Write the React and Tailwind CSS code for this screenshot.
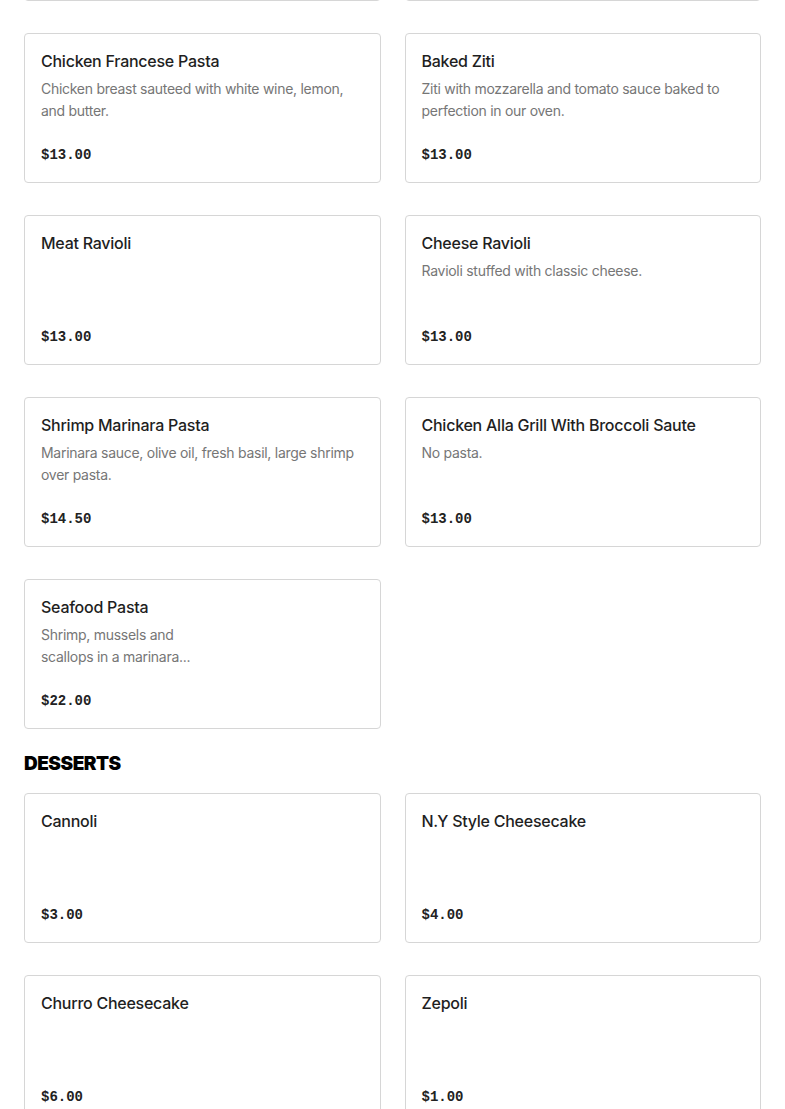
import React from "react";

const pasta = [
  { name: "Chicken Francese Pasta", desc: "Chicken breast sauteed with white wine, lemon, and butter.", price: "$13.00" },
  { name: "Baked Ziti", desc: "Ziti with mozzarella and tomato sauce baked to perfection in our oven.", price: "$13.00" },
  { name: "Meat Ravioli", desc: "", price: "$13.00" },
  { name: "Cheese Ravioli", desc: "Ravioli stuffed with classic cheese.", price: "$13.00" },
  { name: "Shrimp Marinara Pasta", desc: "Marinara sauce, olive oil, fresh basil, large shrimp over pasta.", price: "$14.50" },
  { name: "Chicken Alla Grill With Broccoli Saute", desc: "No pasta.", price: "$13.00" },
  { name: "Seafood Pasta", desc: ["Shrimp, mussels and", "scallops in a marinara..."], price: "$22.00" },
];

const desserts = [
  { name: "Cannoli", desc: "", price: "$3.00" },
  { name: "N.Y Style Cheesecake", desc: "", price: "$4.00" },
  { name: "Churro Cheesecake", desc: "", price: "$6.00" },
  { name: "Zepoli", desc: "", price: "$1.00" },
];

function Card({ item }) {
  return (
    <div className="h-[150px] rounded-[4px] border border-[#d6d6d6] bg-white px-4 pt-[15px] pb-[17px] flex flex-col">
      {item && (
        <>
          <div className="text-[16px] leading-[24px] font-medium text-[#1f1f1f] tracking-[-0.25px]">{item.name}</div>
          {item.desc && (
            <div className="mt-[5px] pr-2 text-[14px] leading-[22px] text-[#767676] tracking-[-0.28px]">
              {Array.isArray(item.desc)
                ? item.desc.map((l, i) => (
                    <React.Fragment key={i}>
                      {l}
                      {i < item.desc.length - 1 && <br />}
                    </React.Fragment>
                  ))
                : item.desc}
            </div>
          )}
          <div
            className="mt-auto text-[14px] leading-[20px] font-bold text-[#222222]"
            style={{ fontFamily: '"Liberation Mono", monospace' }}
          >
            {item.price}
          </div>
        </>
      )}
    </div>
  );
}

export default function App() {
  return (
    <div
      className="bg-white min-h-[1109px] overflow-hidden"
      style={{ fontFamily: 'Inter, "Noto Sans", sans-serif' }}
    >
      <div className="px-6 -mt-[149px]">
        <div className="grid grid-cols-2 gap-x-6 gap-y-8">
          <Card />
          <Card />
          {pasta.map((p) => (
            <Card key={p.name} item={p} />
          ))}
        </div>
        <h2 className="mt-[21px] mb-[15px] h-[28px] text-[19px] leading-[28px] font-black tracking-[-0.5px] text-black">
          DESSERTS
        </h2>
        <div className="grid grid-cols-2 gap-x-6 gap-y-8">
          {desserts.map((p) => (
            <Card key={p.name} item={p} />
          ))}
        </div>
      </div>
    </div>
  );
}
